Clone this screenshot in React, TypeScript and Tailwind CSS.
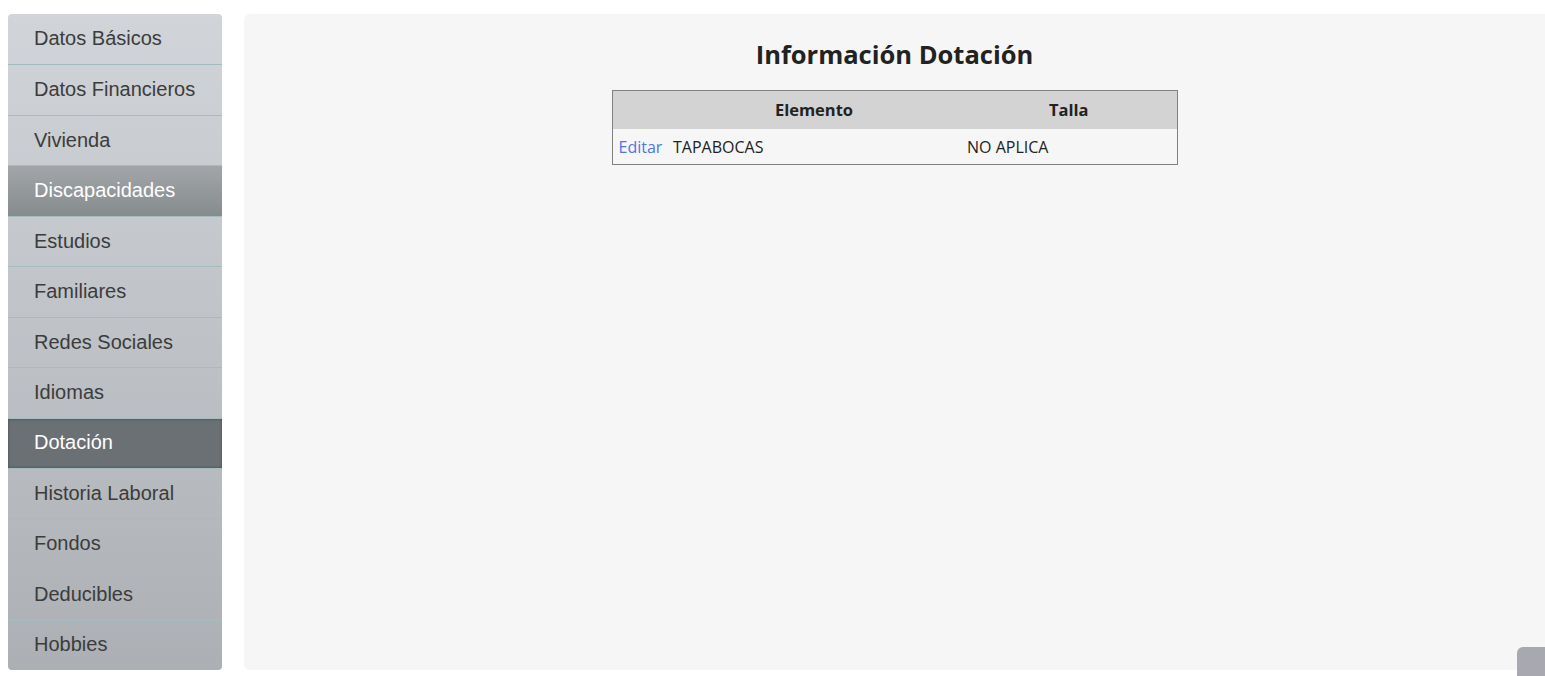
const items = [
  "Datos Básicos",
  "Datos Financieros",
  "Vivienda",
  "Discapacidades",
  "Estudios",
  "Familiares",
  "Redes Sociales",
  "Idiomas",
  "Dotación",
  "Historia Laboral",
  "Fondos",
  "Deducibles",
  "Hobbies",
];

function itemClass(name: string) {
  if (name === "Dotación") {
    return "bg-[#6b7075] text-white shadow-[inset_0_0_3px_rgba(0,0,0,0.35)]";
  }
  if (name === "Discapacidades") {
    return "bg-gradient-to-b from-[#a2a6a9] to-[#868b8e] text-white";
  }
  return "text-[#3c3c3c]";
}

export default function App() {
  return (
    <div className="flex h-[676px] gap-[22px] bg-white pl-2 pt-[14px] pb-[6px] font-['Liberation_Sans',Arial,sans-serif] overflow-hidden relative">
      <nav className="flex w-[214px] shrink-0 flex-col overflow-hidden rounded-[4px] bg-gradient-to-b from-[#d1d4d8] to-[#acafb3]">
        {items.map((name, index) => (
          <a
            key={index}
            href="#"
            className={`flex h-[50.5px] items-center pl-[26px] pb-[2px] text-[20px] leading-none ${
              index > 0 ? "border-t border-[#a3bcbf]" : ""
            } ${itemClass(name)}`}
          >
            {name}
          </a>
        ))}
      </nav>

      <main className="flex flex-1 flex-col items-center rounded-l-[6px] bg-[#f6f6f6] font-['Open_Sans','Noto_Sans',sans-serif]">
        <h1 className="mt-[22px] text-[25.5px] leading-[36px] font-bold text-[#222]">
          Información Dotación
        </h1>
        <table className="mt-[18px] w-[566px] border border-[#808080] text-[16px] text-[#222] border-collapse">
          <thead>
            <tr className="h-[38px] bg-[#d3d3d3]">
              <th className="w-[55px]"></th>
              <th className="w-[294px] pt-[2px] font-bold text-[16.5px]">Elemento</th>
              <th className="pt-[2px] font-bold text-[16.5px]">Talla</th>
            </tr>
          </thead>
          <tbody>
            <tr className="h-[36px]">
              <td className="pl-[6px] pt-[2px]">
                <a href="#" className="text-[#4f74e3]">
                  Editar
                </a>
              </td>
              <td className="pl-[6px] pt-[2px]">TAPABOCAS</td>
              <td className="pl-[6px] pt-[2px]">NO APLICA</td>
            </tr>
          </tbody>
        </table>
      </main>

      <div className="absolute right-0 bottom-0 h-[29px] w-[28px] rounded-tl-[6px] bg-[#a8a8b0]"></div>
    </div>
  );
}
